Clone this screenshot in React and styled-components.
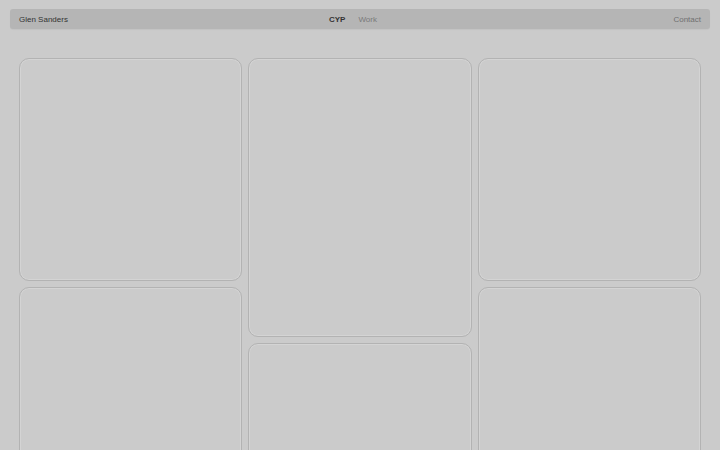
import React from "react";
import styled, { createGlobalStyle } from "styled-components";

const Global = createGlobalStyle`
  html, body { margin: 0; padding: 0; background: #cbcbcb; overflow: hidden; }
  body { font-family: "Liberation Sans", Arial, sans-serif; }
`;

const Page = styled.div`
  width: 720px;
  height: 450px;
  overflow: hidden;
  background: #cbcbcb;
`;

const Header = styled.header`
  margin: 9px 10px 0;
  height: 20px;
  padding: 0 9px;
  box-sizing: border-box;
  background: #b5b5b5;
  border-radius: 3px;
  display: grid;
  grid-template-columns: 1fr auto 1fr;
  align-items: center;
  font-size: 8px;
  box-shadow: 0 1px 1px rgba(0,0,0,0.04);
`;

const Brand = styled.div`
  color: #333;
`;

const Nav = styled.nav`
  display: flex;
  gap: 13px;
  margin-right: 14px;
`;

const NavLink = styled.span`
  color: ${(p) => (p.$active ? "#333" : "#7a7a7a")};
  font-weight: ${(p) => (p.$active ? 700 : 400)};
`;

const Right = styled.div`
  justify-self: end;
  color: #707070;
`;

const Grid = styled.main`
  padding: 29px 19px 0 19px;
  display: grid;
  grid-template-columns: repeat(3, 1fr);
  gap: 6px;
  align-items: start;
`;

const Column = styled.div`
  display: flex;
  flex-direction: column;
  gap: 6px;
`;

const Card = styled.div`
  aspect-ratio: ${(p) => p.$ratio};
  border-radius: 10px;
  border: 1px solid #b3b3b3;
  box-shadow: inset 0 0 0 1px rgba(255,255,255,0.18);
  box-sizing: border-box;
  background: #cbcbcb;
`;

const columns = [
  ["1 / 1", "1 / 1"],
  ["4 / 5", "1 / 1"],
  ["1 / 1", "1 / 1"],
];

export default function App() {
  return (
    <Page>
      <Global />
      <Header>
        <Brand>Glen Sanders</Brand>
        <Nav>
          <NavLink $active>CYP</NavLink>
          <NavLink>Work</NavLink>
        </Nav>
        <Right>Contact</Right>
      </Header>
      <Grid>
        {columns.map((col, i) => (
          <Column key={i}>
            {col.map((r, j) => (
              <Card key={j} $ratio={r} />
            ))}
          </Column>
        ))}
      </Grid>
    </Page>
  );
}
